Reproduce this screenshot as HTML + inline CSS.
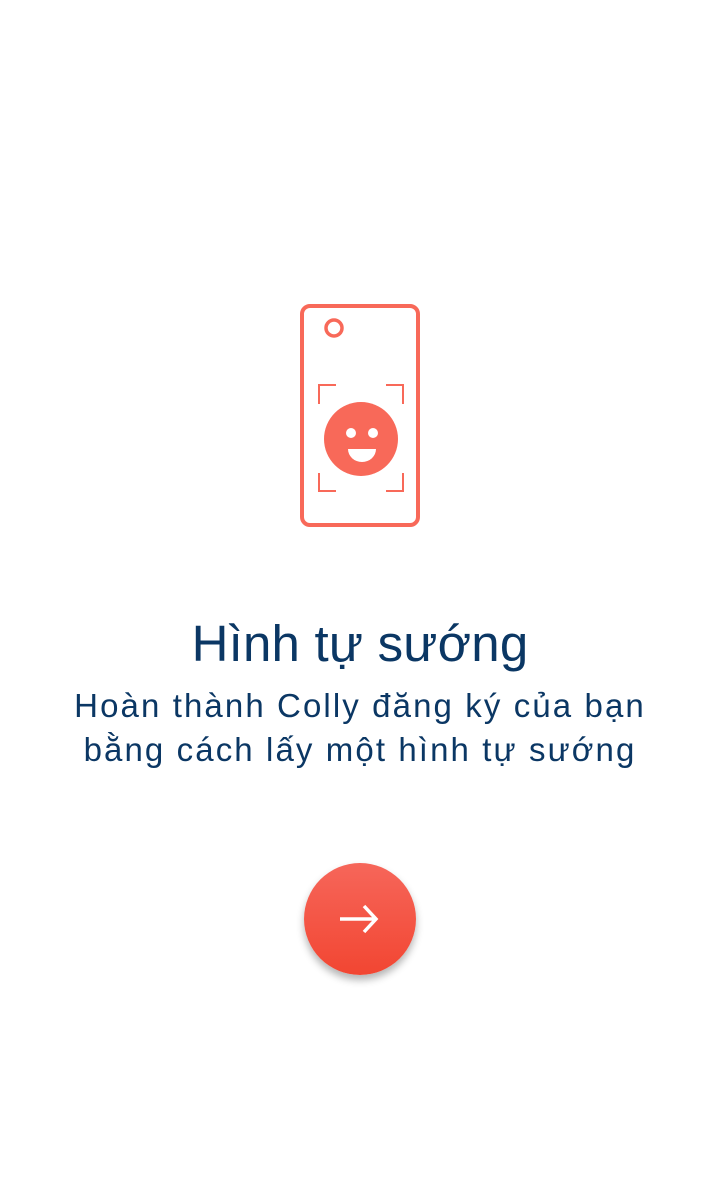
<!DOCTYPE html>
<html><head><meta charset="utf-8"><style>
html,body{margin:0;padding:0;background:#fff;width:720px;height:1184px;overflow:hidden;position:relative;font-family:"Liberation Sans","DejaVu Sans",sans-serif;color:#0b3764}
.t{position:absolute;left:0;width:720px;text-align:center;white-space:nowrap}
#h{top:611px;font-size:51px;line-height:66px;letter-spacing:0.2px}
#s{top:684px;font-size:33px;line-height:44px;letter-spacing:2.1px}
#btn{position:absolute;left:304px;top:863px;width:112px;height:112px;border-radius:50%;background:linear-gradient(#f6665a,#f24632);box-shadow:0 5px 8px rgba(0,0,0,.3)}
</style></head><body>
<svg width="720" height="600" style="position:absolute;left:0;top:0">
<rect x="302" y="306" width="116" height="219" rx="8" fill="none" stroke="#f86959" stroke-width="4"/>
<circle cx="334" cy="328" r="8" fill="none" stroke="#f86959" stroke-width="3.5"/>
<g fill="none" stroke="#f86959" stroke-width="2">
<path d="M319 404V385H336M386 385H403V404M319 473V491H336M386 491H403V473"/>
</g>
<circle cx="361" cy="439" r="37" fill="#f86959"/>
<circle cx="351" cy="433" r="5" fill="#fff"/>
<circle cx="373" cy="433" r="5" fill="#fff"/>
<path d="M348 449H376A14 13 0 0 1 348 449Z" fill="#fff"/>
</svg>
<div class="t" id="h">Hình tự sướng</div>
<div class="t" id="s">Hoàn thành Colly đăng ký của bạn<br>bằng cách lấy một hình tự sướng</div>
<div id="btn"><svg width="112" height="112"><path d="M36 56H72M60 43L72 56L60 69" fill="none" stroke="#fff" stroke-width="3.5"/></svg></div>
</body></html>
